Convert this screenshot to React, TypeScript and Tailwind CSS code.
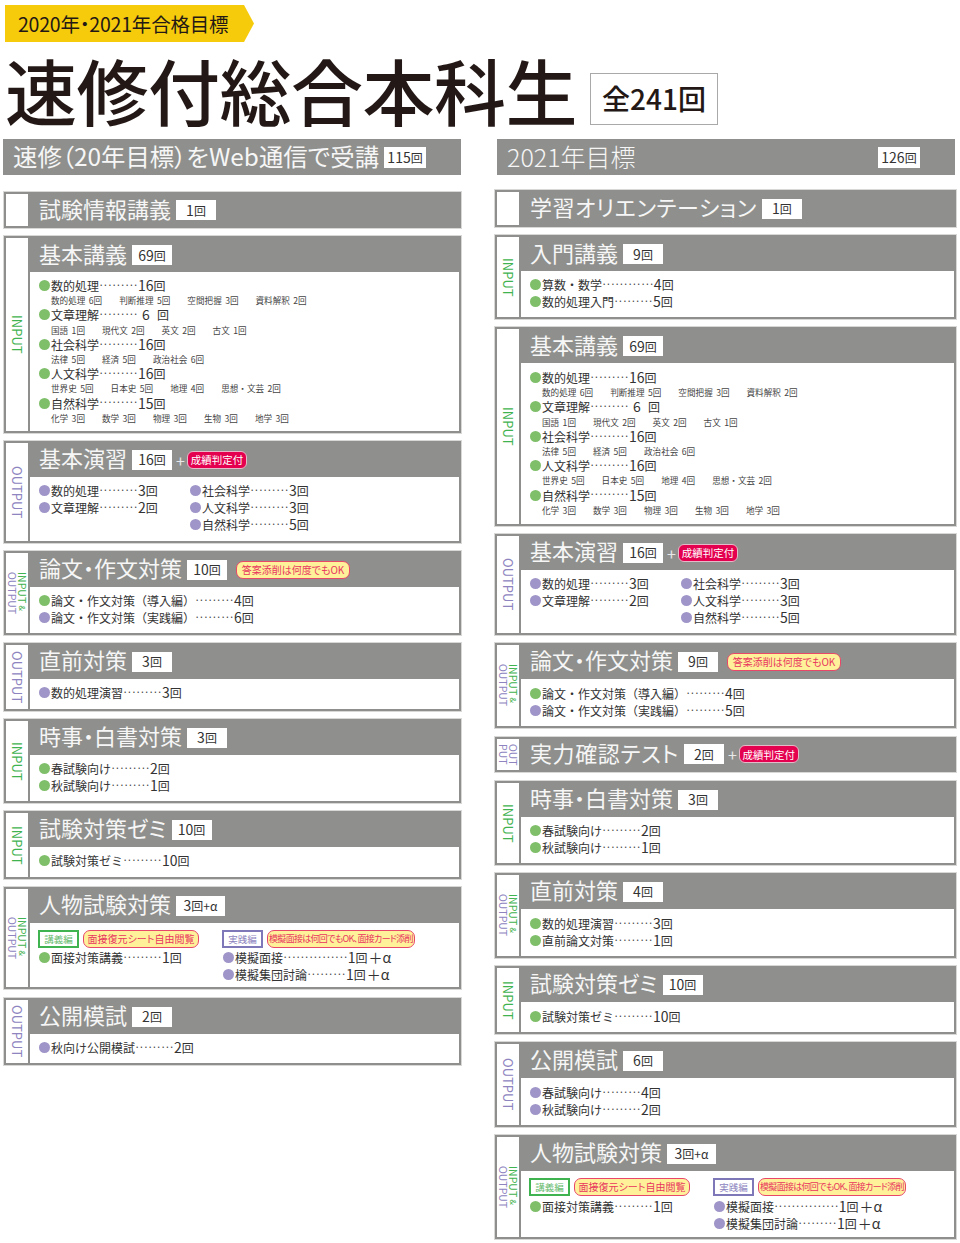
import type { ReactNode } from "react";

type Kind = "in" | "out" | "both" | "split" | "";
type Row = [color: "g" | "p", name: string, count: string, unit?: string];

const green = "bg-[#7fbf6a]";
const purple = "bg-[#9f95c8]";

function Count({ value, className = "" }: { value: string; className?: string }) {
  // 数字だけ少し大きく、回は小さめ
  const parts = value.split(/(\d+)/).filter(Boolean);
  return (
    <span className={className}>
      {parts.map((p, i) => (
        <span key={i} className={/\d/.test(p) ? "text-[14px]" : ""}>
          {p}
        </span>
      ))}
    </span>
  );
}

function Leader({ dots = "·········" }: { dots?: string }) {
  return <span className="text-[7.3px] font-bold leading-none text-[#444]">{dots}</span>;
}

function Item({ row, leader }: { row: Row; leader?: string }) {
  const [color, name, count, unit] = row;
  return (
    <div className="flex h-[17px] items-center whitespace-nowrap text-[12px] leading-[17px] text-[#333]">
      <span className={`mr-px size-[11px] rounded-full ${color === "g" ? green : purple}`} />
      <span>{name}</span>
      <Leader dots={leader} />
      <Count value={count} />
      {unit && <span className="ml-px text-[14px]">{unit}</span>}
    </div>
  );
}

function SubRow({ items }: { items: string[] }) {
  return (
    <div className="flex h-[12.4px] items-center gap-[17px] whitespace-nowrap pl-[12px] text-[8.6px] leading-[12px] text-[#444] [word-spacing:1.5px]">
      {items.map((t) => (
        <span key={t}>{t}</span>
      ))}
    </div>
  );
}

function KihonBody() {
  return (
    <>
      <Item row={["g", "数的処理", "16回"]} />
      <SubRow items={["数的処理 6回", "判断推理 5回", "空間把握 3回", "資料解釈 2回"]} />
      <div className="flex h-[17px] items-center text-[12px] text-[#333]">
        <span className={`mr-px size-[11px] rounded-full ${green}`} />
        <span>文章理解</span>
        <Leader />
        <span className="w-[16px] text-center text-[14px]">6</span>
        <span className="w-[15px] text-right">回</span>
      </div>
      <SubRow items={["国語 1回", "現代文 2回", "英文 2回", "古文 1回"]} />
      <Item row={["g", "社会科学", "16回"]} />
      <SubRow items={["法律 5回", "経済 5回", "政治社会 6回"]} />
      <Item row={["g", "人文科学", "16回"]} />
      <SubRow items={["世界史 5回", "日本史 5回", "地理 4回", "思想・文芸 2回"]} />
      <Item row={["g", "自然科学", "15回"]} />
      <SubRow items={["化学 3回", "数学 3回", "物理 3回", "生物 3回", "地学 3回"]} />
    </>
  );
}

function EnshuBody() {
  return (
    <div className="flex">
      <div className="w-[151px]">
        <Item row={["p", "数的処理", "3回"]} />
        <Item row={["p", "文章理解", "2回"]} />
      </div>
      <div>
        <Item row={["p", "社会科学", "3回"]} />
        <Item row={["p", "人文科学", "3回"]} />
        <Item row={["p", "自然科学", "5回"]} />
      </div>
    </div>
  );
}

function Chip({ green: isGreen, children }: { green?: boolean; children: ReactNode }) {
  return (
    <span
      className={`flex h-[18px] w-[41px] items-center justify-center border-2 text-[9.5px] ${
        isGreen ? "border-[#3fb34f] text-[#5fb96a]" : "border-[#7f78b8] text-[#8d84c0]"
      }`}
    >
      {children}
    </span>
  );
}

function YellowPill({ className = "", children }: { className?: string; children: ReactNode }) {
  return (
    <span
      className={`flex h-[18px] items-center justify-center whitespace-nowrap rounded-[7px] border border-[#e8476a] bg-[#fff09a] text-[#e8365f] [font-feature-settings:'palt'] ${className}`}
    >
      {children}
    </span>
  );
}

function JinbutsuBody({ rowGap = "mt-[2px]" }: { rowGap?: string }) {
  return (
    <div className="flex -ml-px">
      <div className="w-[184px]">
        <div className="flex gap-[4px]">
          <Chip green>講義編</Chip>
          <YellowPill className="w-[116px] text-[10px]">面接復元シート自由閲覧</YellowPill>
        </div>
        <div className={`ml-px ${rowGap}`}>
          <Item row={["g", "面接対策講義", "1回"]} />
        </div>
      </div>
      <div>
        <div className="flex gap-[4px]">
          <Chip>実践編</Chip>
          <YellowPill className="w-[148px] text-[9px] tracking-[-0.7px]">模擬面接は何回でもOK、面接カード添削</YellowPill>
        </div>
        <div className={`ml-px ${rowGap}`}>
          <Item row={["p", "模擬面接", "1回", "＋α"]} leader="···············" />
          <Item row={["p", "模擬集団討論", "1回", "＋α"]} />
        </div>
      </div>
    </div>
  );
}

function SideLabel({ kind }: { kind: Kind }) {
  const base = "[writing-mode:vertical-rl] whitespace-nowrap";
  if (kind === "in")
    return <span className={`${base} text-[13px] leading-none text-[#3fb34f]`}>INPUT</span>;
  if (kind === "out")
    return <span className={`${base} text-[13px] leading-none text-[#8d84c0]`}>OUTPUT</span>;
  if (kind === "both")
    return (
      <span className={`${base} text-[10.5px] leading-[10px]`}>
        <span className="block text-[#3fb34f]">
          INPUT <span className="text-[8px]">&amp;</span>
        </span>
        <span className="block text-[#8d84c0]">OUTPUT</span>
      </span>
    );
  if (kind === "split")
    return (
      <span className={`${base} text-[10.5px] leading-[10px] text-[#8d84c0]`}>
        <span className="block">OUT</span>
        <span className="block">PUT</span>
      </span>
    );
  return null;
}

function Badge({ className = "w-[40px]", children }: { className?: string; children: string }) {
  return (
    <span
      className={`ml-[5px] flex h-[20px] items-center justify-center bg-white text-[12px] text-[#333] ${className}`}
    >
      <Count value={children} />
    </span>
  );
}

function Seiseki() {
  return (
    <>
      <span className="ml-[4px] text-[16px] leading-none text-[#e8e8e8]">+</span>
      <span className="ml-[2px] flex h-[18px] w-[60px] items-center justify-center rounded-[6px] border border-[#e6b9c8] bg-[#e4004f] text-[10.5px] text-white">
        成績判定付
      </span>
    </>
  );
}

function Tensaku() {
  return <YellowPill className="ml-[9px] w-[114px] text-[10px]">答案添削は何度でもOK</YellowPill>;
}

function Card({
  kind,
  title,
  count,
  extra,
  className = "",
  bodyClass = "pt-[5px] pb-[7px]",
  badgeClass,
  headerClass = "h-[34px]",
  titleClass = "",
  children,
}: {
  kind: Kind;
  title: string;
  count: string;
  extra?: ReactNode;
  className?: string;
  bodyClass?: string;
  badgeClass?: string;
  headerClass?: string;
  titleClass?: string;
  children?: ReactNode;
}) {
  return (
    <section
      className={`flex border-2 border-[#8f908d] bg-white shadow-[0_0_0_1px_#d8d9d7] ${className}`}
    >
      <div className="flex w-[22px] shrink-0 items-center justify-center bg-white">
        <SideLabel kind={kind} />
      </div>
      <div className="min-w-0 flex-1 border-l-2 border-[#8f908d]">
        <header className={`flex items-center whitespace-nowrap bg-[#8f908d] pl-[9px] ${headerClass}`}>
          <h3 className={`mb-[5px] text-[22px] leading-none text-[#f6f6f6] [font-feature-settings:'palt'] ${titleClass}`}>{title}</h3>
          <Badge className={badgeClass}>{count}</Badge>
          {extra}
        </header>
        {children && <div className={`pl-[9px] ${bodyClass}`}>{children}</div>}
      </div>
    </section>
  );
}

function SectionBar({ title, count, right }: { title: string; count: string; right?: boolean }) {
  return (
    <div className="flex h-[36px] items-center bg-[#8f908d] pl-[10px]">
      <h2
        className={`mb-px whitespace-nowrap leading-none text-[#f6f6f6] [font-feature-settings:'palt'] ${
          right ? "text-[25px] font-light" : "text-[24.4px]"
        }`}
      >
        {title}
      </h2>
      <span
        className={`flex h-[21px] w-[42px] items-center justify-center bg-white text-[12px] text-[#333] ${
          right ? "ml-auto mr-[35px]" : "ml-[5px]"
        }`}
      >
        <Count value={count} />
      </span>
    </div>
  );
}

export default function App() {
  return (
    <div className="h-[1243px] w-[960px] overflow-hidden bg-white pt-[5px] font-['Noto_Sans_CJK_JP',sans-serif] text-[#231815]">
      <div className="ml-[5px] flex h-[37px] w-[249px] items-center bg-[#f5cb0c] pl-[13px] text-[19.5px] leading-none tracking-[-0.2px] [clip-path:polygon(0_0,239px_0,249px_50%,239px_100%,0_100%)] [font-feature-settings:'palt']">
        2020年・2021年合格目標
      </div>

      <div className="flex h-[97px] items-start pl-[5px]">
        <h1 className="mt-[11px] whitespace-nowrap text-[72px] font-medium leading-none tracking-[-0.5px]">
          速修付総合本科生
        </h1>
        <div className="mt-[31px] ml-[13px] flex h-[52px] w-[128px] items-center justify-center border border-[#a9a9a9] pb-[3px] text-[28px] font-medium leading-none">
          全241回
        </div>
      </div>

      <div className="flex">
        {/* 左カラム */}
        <div className="ml-[3px] w-[458px]">
          <SectionBar title="速修（20年目標）をWeb通信で受講" count="115回" />
          <div className="mt-[17px] ml-px flex flex-col gap-[8px]">
            <Card kind="" title="試験情報講義" count="1回" headerClass="h-[32px]" />
            <Card kind="in" title="基本講義" count="69回">
              <KihonBody />
            </Card>
            <Card kind="out" title="基本演習" count="16回" extra={<Seiseki />} bodyClass="pt-[5px] pb-[8px]">
              <EnshuBody />
            </Card>
            <Card kind="both" title="論文・作文対策" count="10回" extra={<Tensaku />}>
              <Item row={["g", "論文・作文対策（導入編） ", "4回"]} />
              <Item row={["p", "論文・作文対策（実践編） ", "6回"]} />
            </Card>
            <Card kind="out" title="直前対策" count="3回" bodyClass="pt-[5px] pb-[8px]">
              <Item row={["p", "数的処理演習", "3回"]} />
            </Card>
            <Card kind="in" title="時事・白書対策" count="3回">
              <Item row={["g", "春試験向け", "2回"]} />
              <Item row={["g", "秋試験向け", "1回"]} />
            </Card>
            <Card kind="in" title="試験対策ゼミ" count="10回" bodyClass="pt-[5px] pb-[8px]">
              <Item row={["g", "試験対策ゼミ", "10回"]} />
            </Card>
            <Card kind="both" title="人物試験対策" count="3回+α" badgeClass="w-[49px]" bodyClass="pt-[7px] pb-[4px]">
              <JinbutsuBody rowGap="mt-px" />
            </Card>
            <Card kind="out" title="公開模試" count="2回" className="mt-px">
              <Item row={["p", "秋向け公開模試", "2回"]} />
            </Card>
          </div>
        </div>

        {/* 右カラム */}
        <div className="ml-[34px] w-[461px]">
          <div className="ml-[2px] mr-px">
            <SectionBar title="2021年目標" count="126回" right />
          </div>
          <div className="mt-[15px] flex flex-col gap-[8px]">
            <Card
              kind=""
              title="学習オリエンテーション"
              count="1回"
              headerClass="h-[33px]"
              titleClass="tracking-[0.6px]"
            />
            <Card kind="in" title="入門講義" count="9回">
              <Item row={["g", "算数・数学", "4回"]} leader="············" />
              <Item row={["g", "数的処理入門", "5回"]} />
            </Card>
            <Card kind="in" title="基本講義" count="69回" bodyClass="pt-[6px] pb-[8px]">
              <KihonBody />
            </Card>
            <Card kind="out" title="基本演習" count="16回" extra={<Seiseki />}>
              <EnshuBody />
            </Card>
            <Card kind="both" title="論文・作文対策" count="9回" extra={<Tensaku />} bodyClass="pt-[6px] pb-[7px]">
              <Item row={["g", "論文・作文対策（導入編） ", "4回"]} />
              <Item row={["p", "論文・作文対策（実践編） ", "5回"]} />
            </Card>
            <Card
              kind="split"
              title="実力確認テスト"
              count="2回"
              extra={<Seiseki />}
              className="mt-px"
              headerClass="h-[31px]"
              titleClass="tracking-[0.6px]"
            />
            <Card kind="in" title="時事・白書対策" count="3回" className="mt-px">
              <Item row={["g", "春試験向け", "2回"]} />
              <Item row={["g", "秋試験向け", "1回"]} />
            </Card>
            <Card kind="both" title="直前対策" count="4回" bodyClass="pt-[6px] pb-[7px]">
              <Item row={["g", "数的処理演習", "3回"]} />
              <Item row={["g", "直前論文対策", "1回"]} />
            </Card>
            <Card kind="in" title="試験対策ゼミ" count="10回" bodyClass="pt-[6px] pb-[7px]">
              <Item row={["g", "試験対策ゼミ", "10回"]} />
            </Card>
            <Card kind="out" title="公開模試" count="6回" bodyClass="pt-[6px] pb-[7px]">
              <Item row={["p", "春試験向け", "4回"]} />
              <Item row={["p", "秋試験向け", "2回"]} />
            </Card>
            <Card kind="both" title="人物試験対策" count="3回+α" badgeClass="w-[49px]" bodyClass="pt-[7px] pb-[5px]">
              <JinbutsuBody />
            </Card>
          </div>
        </div>
      </div>
    </div>
  );
}
